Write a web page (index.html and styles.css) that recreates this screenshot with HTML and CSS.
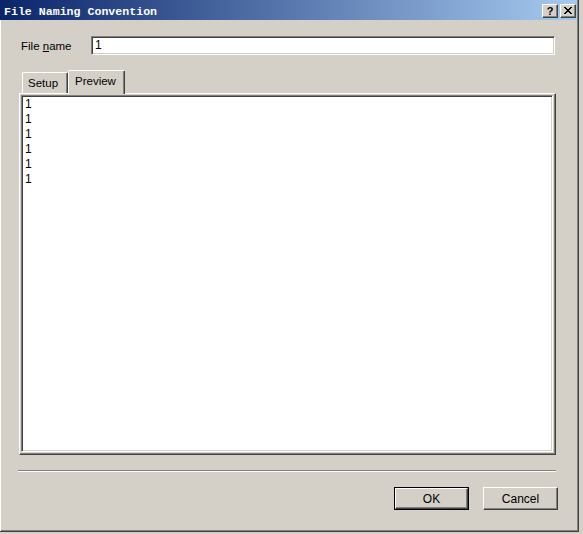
FILE: index.html
```html
<!DOCTYPE html>
<html>
<head>
<meta charset="utf-8">
<link rel="stylesheet" href="styles.css">
</head>
<body>
<div class="window">
  <div class="titlebar">
    <span class="title">File Naming Convention</span>
    <div class="caption-btns">
      <div class="cap cap-help">?</div>
      <div class="cap cap-close">
        <svg width="8" height="7" viewBox="0 0 8 7"><path d="M0 0h2v1h1v1h2v-1h1v-1h2v1h-1v1h-1v1h-1v1h1v1h1v1h1v1h-2v-1h-1v-1h-2v1h-1v1h-2v-1h1v-1h1v-1h1v-1h-1v-1h-1v-1h-1z" fill="#000"/></svg>
      </div>
    </div>
  </div>
  <div class="client">
    <div class="name-row">
      <span class="label">File <u>n</u>ame</span>
      <div class="input">1</div>
    </div>
    <div class="tabs">
      <div class="tab">Setup</div>
      <div class="tab active">Preview</div>
    </div>
    <div class="panel">
      <div class="preview">
        <div class="line">1</div>
        <div class="line">1</div>
        <div class="line">1</div>
        <div class="line">1</div>
        <div class="line">1</div>
        <div class="line">1</div>
      </div>
    </div>
    <div class="sep"></div>
    <div class="buttons">
      <div class="btn-default"><div class="btn"><span>OK</span></div></div>
      <div class="btn"><span>Cancel</span></div>
    </div>
  </div>
</div>
</body>
</html>
```

FILE: styles.css
```css
html, body {
  margin: 0;
  padding: 0;
  background: #d4d0c8;
  width: 583px;
  height: 534px;
  overflow: hidden;
}

.window {
  width: 578px;
  height: 531px;
  display: flex;
  flex-direction: column;
  background: #d4d0c8;
  border-right: 1px solid #404040;
  border-bottom: 1px solid #404040;
  box-shadow: inset -1px -1px 0 #808080;
  font-family: "Liberation Sans", Arial, sans-serif;
  font-size: 11.5px;
  color: #000;
}

.titlebar {
  height: 20px;
  flex: none;
  display: flex;
  align-items: center;
  justify-content: space-between;
  background: linear-gradient(to right, #0a246a, #a6caf0);
  padding: 0 1px 0 4px;
  margin-right: 1px;
}

.title {
  font-family: "Liberation Mono", "Courier New", monospace;
  font-weight: bold;
  font-size: 11.6px;
  color: #fff;
  margin-top: 2px;
}

.caption-btns {
  display: flex;
  gap: 2px;
  margin-top: 1px;
}

.cap {
  width: 12px;
  height: 10px;
  background: #d4d0c8;
  border-top: 1px solid #fff;
  border-left: 1px solid #fff;
  border-right: 1px solid #404040;
  border-bottom: 1px solid #404040;
  box-shadow: inset -1px -1px 0 #808080;
  padding: 1px;
  display: flex;
  align-items: center;
  justify-content: center;
}

.cap-help {
  font-family: "Liberation Sans", Arial, sans-serif;
  font-weight: bold;
  font-size: 11px;
  line-height: 10px;
}

.cap-close svg {
  display: block;
}

.client {
  flex: 1;
  display: flex;
  flex-direction: column;
  padding: 15px 22px 0 19px;
  box-shadow: inset 1px 0 0 #fff;
}

.name-row {
  display: flex;
  align-items: center;
  height: 21px;
  margin-right: 1px;
}

.label {
  width: 70px;
  padding-left: 2px;
}

.input {
  flex: 1;
  height: 17px;
  background: #fff;
  border-top: 1px solid #808080;
  border-left: 1px solid #808080;
  border-right: 1px solid #fff;
  border-bottom: 1px solid #fff;
  box-shadow: inset 1px 1px 0 #404040, inset -1px -1px 0 #d4d0c8;
  padding: 0 3px;
  line-height: 17px;
  font-size: 12px;
}

.tabs {
  display: flex;
  align-items: flex-end;
  margin-top: 13px;
  height: 24px;
  padding-left: 3px;
}

.tab {
  height: 20px;
  padding: 0 4px 0 5px;
  line-height: 21px;
  background: #d4d0c8;
  border-top: 1px solid #fff;
  border-left: 1px solid #fff;
  border-right: 1px solid #404040;
  box-shadow: inset -1px 0 0 #808080;
  border-top-left-radius: 2px;
  border-top-right-radius: 2px;
  width: 35px;
}

.tab.active {
  height: 23px;
  line-height: 21px;
  width: 44px;
  padding: 0 5px 0 6px;
  position: relative;
  z-index: 1;
  margin-bottom: -1px;
}

.panel {
  height: 357px;
  border-top: 1px solid #fff;
  border-left: 1px solid #fff;
  border-right: 1px solid #404040;
  border-bottom: 1px solid #404040;
  box-shadow: inset -1px -1px 0 #808080;
  padding: 1px 2px 2px 1px;
  display: flex;
}

.preview {
  flex: 1;
  background: #fff;
  border-top: 1px solid #808080;
  border-left: 1px solid #808080;
  border-right: 1px solid #fff;
  border-bottom: 1px solid #fff;
  box-shadow: inset 1px 1px 0 #404040, inset -1px -1px 0 #d4d0c8;
  padding: 0 3px;
}

.line {
  height: 15px;
  line-height: 15px;
  font-size: 12px;
}

.line:first-child {
  margin-top: 1px;
}

.sep {
  margin-top: 15px;
  border-top: 1px solid #808080;
  border-bottom: 1px solid #fff;
  height: 0;
  margin-left: -1px;
}

.buttons {
  display: flex;
  justify-content: flex-end;
  gap: 14px;
  margin-top: 15px;
  margin-right: -2px;
}

.btn {
  width: 71px;
  height: 19px;
  background: #d4d0c8;
  border-top: 1px solid #fff;
  border-left: 1px solid #fff;
  border-right: 1px solid #404040;
  border-bottom: 1px solid #404040;
  box-shadow: inset -1px -1px 0 #808080;
  padding: 1px;
  display: flex;
  align-items: center;
  justify-content: center;
  font-size: 12px;
}

.btn-default {
  border: 1px solid #000;
  display: flex;
}

.btn-default .btn {
  width: 69px;
  height: 17px;
}
```
